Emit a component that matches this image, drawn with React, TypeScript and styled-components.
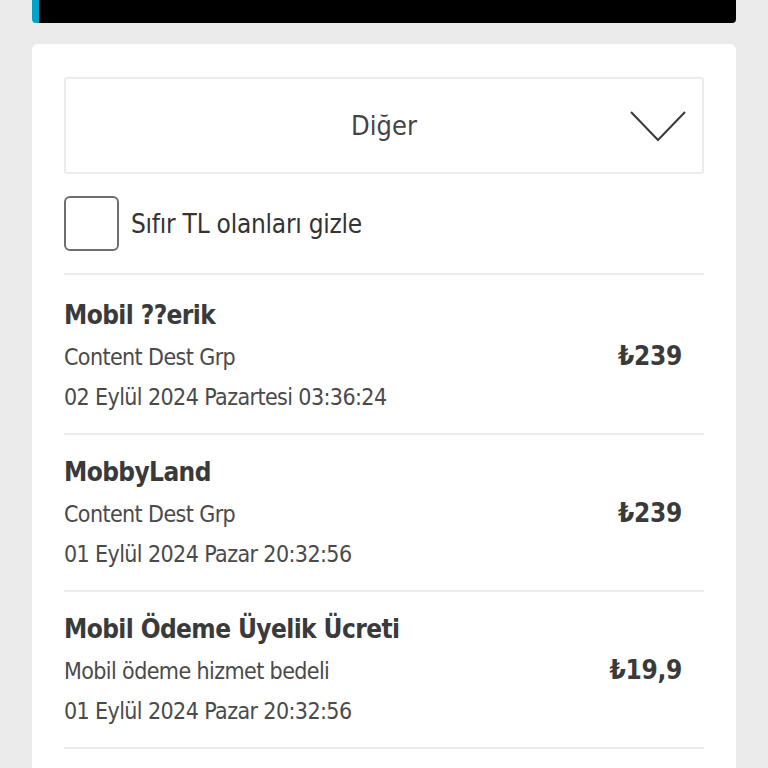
import React, { useState } from "react";
import styled, { createGlobalStyle } from "styled-components";

interface Charge {
  id: number;
  title: string;
  provider: string;
  date: string;
  amount: string;
}

const charges: Charge[] = [
  {
    id: 1,
    title: "Mobil ??erik",
    provider: "Content Dest Grp",
    date: "02 Eylül 2024 Pazartesi 03:36:24",
    amount: "₺239",
  },
  {
    id: 2,
    title: "MobbyLand",
    provider: "Content Dest Grp",
    date: "01 Eylül 2024 Pazar 20:32:56",
    amount: "₺239",
  },
  {
    id: 3,
    title: "Mobil Ödeme Üyelik Ücreti",
    provider: "Mobil ödeme hizmet bedeli",
    date: "01 Eylül 2024 Pazar 20:32:56",
    amount: "₺19,9",
  },
];

const App: React.FC = () => {
  const [hideZero, setHideZero] = useState(false);

  const visible = hideZero
    ? charges.filter((c) => c.amount !== "₺0")
    : charges;

  return (
    <>
      <GlobalStyle />
      <Page>
        <TopBar />
        <Card>
          <Select>
            <SelectLabel>Diğer</SelectLabel>
            <Chevron width="56" height="32" viewBox="0 0 56 32">
              <polyline
                points="1,2 28,30 55,2"
                fill="none"
                stroke="#3a3a3a"
                strokeWidth="2"
              />
            </Chevron>
          </Select>
          <FilterRow onClick={() => setHideZero(!hideZero)}>
            <CheckBox checked={hideZero} />
            <FilterLabel>Sıfır TL olanları gizle</FilterLabel>
          </FilterRow>
          <List>
            {visible.map((c) => (
              <Item key={c.id}>
                <Info>
                  <Title>{c.title}</Title>
                  <Provider>{c.provider}</Provider>
                  <DateText>{c.date}</DateText>
                </Info>
                <Amount>{c.amount}</Amount>
              </Item>
            ))}
          </List>
        </Card>
      </Page>
    </>
  );
};

export default App;

// Styled components
const GlobalStyle = createGlobalStyle`
  html, body {
    margin: 0;
    padding: 0;
    background: #ebebeb;
    font-family: "DejaVu Sans Condensed", Roboto, sans-serif;
    color: #333;
  }
`;

const Page = styled.div`
  width: 704px;
  margin: 0 auto;
  height: 768px;
  overflow: hidden;
`;

const TopBar = styled.div`
  height: 23px;
  background: #000;
  border-left: 7px solid #00a3c8;
  border-radius: 0 0 4px 4px;
  margin-bottom: 21px;
`;

const Card = styled.div`
  background: #fff;
  border-radius: 6px;
  padding: 33px 32px 0;
  min-height: 800px;
`;

const Select = styled.div`
  height: 93px;
  border: 2px solid #ececec;
  border-radius: 3px;
  display: flex;
  align-items: center;
  justify-content: center;
  position: relative;
`;

const SelectLabel = styled.span`
  font-size: 27px;
  color: #444;
`;

const Chevron = styled.svg`
  position: absolute;
  right: 16px;
  top: 31px;
`;

const FilterRow = styled.div`
  display: flex;
  align-items: center;
  gap: 12px;
  margin-top: 22px;
  padding-bottom: 22px;
  border-bottom: 2px solid #ececec;
  cursor: pointer;
`;

const CheckBox = styled.div<{ checked: boolean }>`
  width: 51px;
  height: 51px;
  border: 2px solid #6e6e6e;
  border-radius: 6px;
  background: ${(p) => (p.checked ? "#e60000" : "#fff")};
`;

const FilterLabel = styled.span`
  font-size: 26px;
  letter-spacing: -0.25px;
  color: #333;
`;

const List = styled.div`
  display: flex;
  flex-direction: column;
  margin-top: 3px;
`;

const Item = styled.div`
  display: flex;
  align-items: center;
  justify-content: space-between;
  padding: 21px 22px 16px 0;
  border-bottom: 2px solid #ececec;
`;

const Info = styled.div`
  display: flex;
  flex-direction: column;
`;

const Title = styled.div`
  font-size: 26px;
  font-weight: bold;
  line-height: 32px;
  letter-spacing: -0.6px;
  margin-bottom: 6px;
  color: #3a3a3a;
`;

const Provider = styled.div`
  font-size: 23px;
  line-height: 40px;
  letter-spacing: -0.6px;
  color: #4a4a4a;
`;

const DateText = styled(Provider)``;

const Amount = styled.div`
  font-size: 26px;
  font-weight: bold;
  letter-spacing: -0.3px;
  color: #3a3a3a;
  margin-bottom: 4px;
`;
